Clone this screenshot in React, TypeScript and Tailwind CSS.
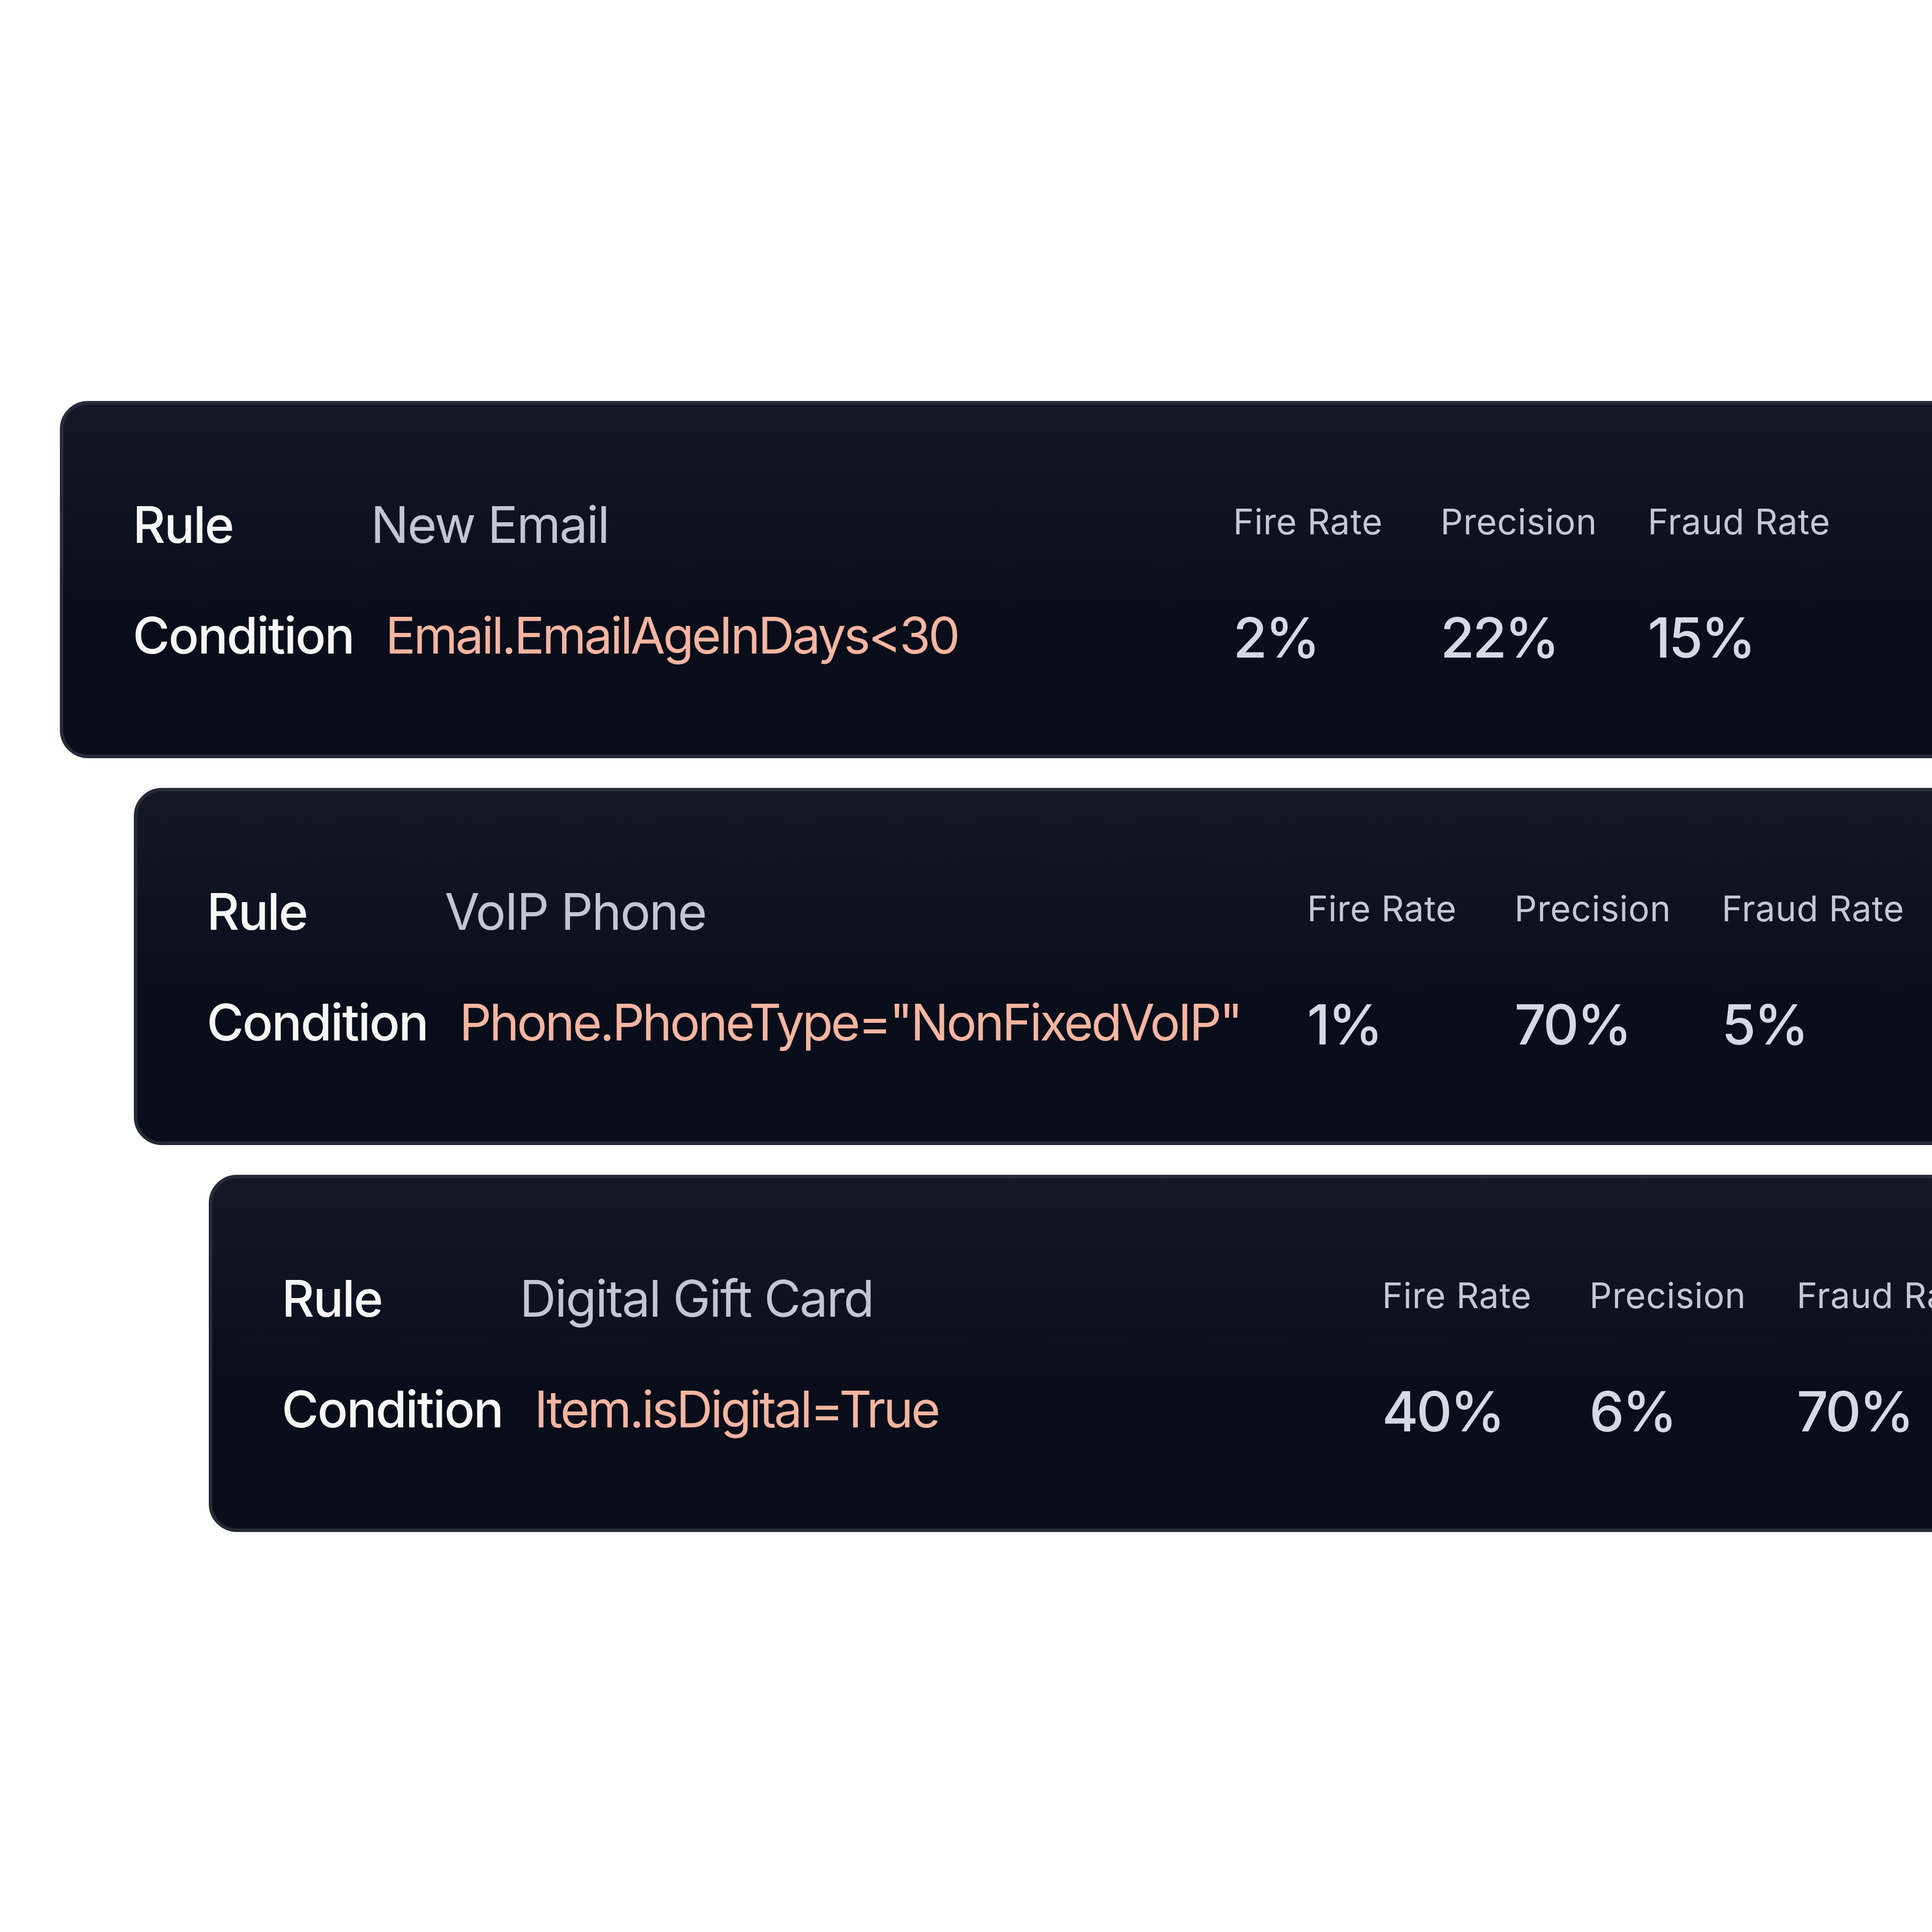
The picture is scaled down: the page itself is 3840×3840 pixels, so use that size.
import React from 'react';

const RULES = [
  { name: "New Email", condition: "Email.EmailAgeInDays<30", fire: "2%", precision: "22%", fraud: "15%", offset: "ml-[119px]" },
  { name: "VoIP Phone", condition: 'Phone.PhoneType="NonFixedVoIP"', fire: "1%", precision: "70%", fraud: "5%", offset: "ml-[266px]" },
  { name: "Digital Gift Card", condition: "Item.isDigital=True", fire: "40%", precision: "6%", fraud: "70%", offset: "ml-[415px]" },
];

function Metric({ label, value }: { label: string; value: string }) {
  return (
    <div className="w-[412px] shrink-0 flex flex-col">
      <div className="mt-[9px] text-[70px] leading-none tracking-[0.01em] text-[#c4c8d3] whitespace-nowrap">{label}</div>
      <div className="mt-[140px] text-[110px] leading-none font-medium tracking-[-0.035em] text-[#d6d9e2] whitespace-nowrap">{value}</div>
    </div>
  );
}

function RuleCard({ rule }: { rule: typeof RULES[number] }) {
  return (
    <div
      className={`${rule.offset} w-[3800px] h-[710px] shrink-0 rounded-[56px] border-[7px] border-[#272a37] bg-linear-to-b from-[#151827] to-[#0a0d1a] to-60% pl-[138px] pt-[189px] flex`}
    >
      <div className="w-[2187px] shrink-0 flex flex-col">
        <div className="flex items-center h-[100px] text-[100px] leading-none tracking-[-0.024em] whitespace-nowrap">
          <span className="w-[473px] shrink-0 font-medium text-[#f7f7f8]">Rule</span>
          <span className="text-[#c2c6d2]">{rule.name}</span>
        </div>
        <div className="mt-[120px] flex items-center h-[100px] text-[100px] leading-none whitespace-nowrap">
          <span className="w-[502px] shrink-0 font-medium tracking-[-0.024em] text-[#f7f7f8]">Condition</span>
          <span className="tracking-[-0.042em] text-[#f5b5a1]">{rule.condition}</span>
        </div>
      </div>
      <Metric label="Fire Rate" value={rule.fire} />
      <Metric label="Precision" value={rule.precision} />
      <Metric label="Fraud Rate" value={rule.fraud} />
    </div>
  );
}

export default function App() {
  return (
    <div className="w-[3840px] h-[3840px] bg-white overflow-hidden font-['Inter',sans-serif] pt-[797px]">
      <div className="flex flex-col gap-[59px]">
        {RULES.map((r) => (
          <RuleCard key={r.name} rule={r} />
        ))}
      </div>
    </div>
  );
}
